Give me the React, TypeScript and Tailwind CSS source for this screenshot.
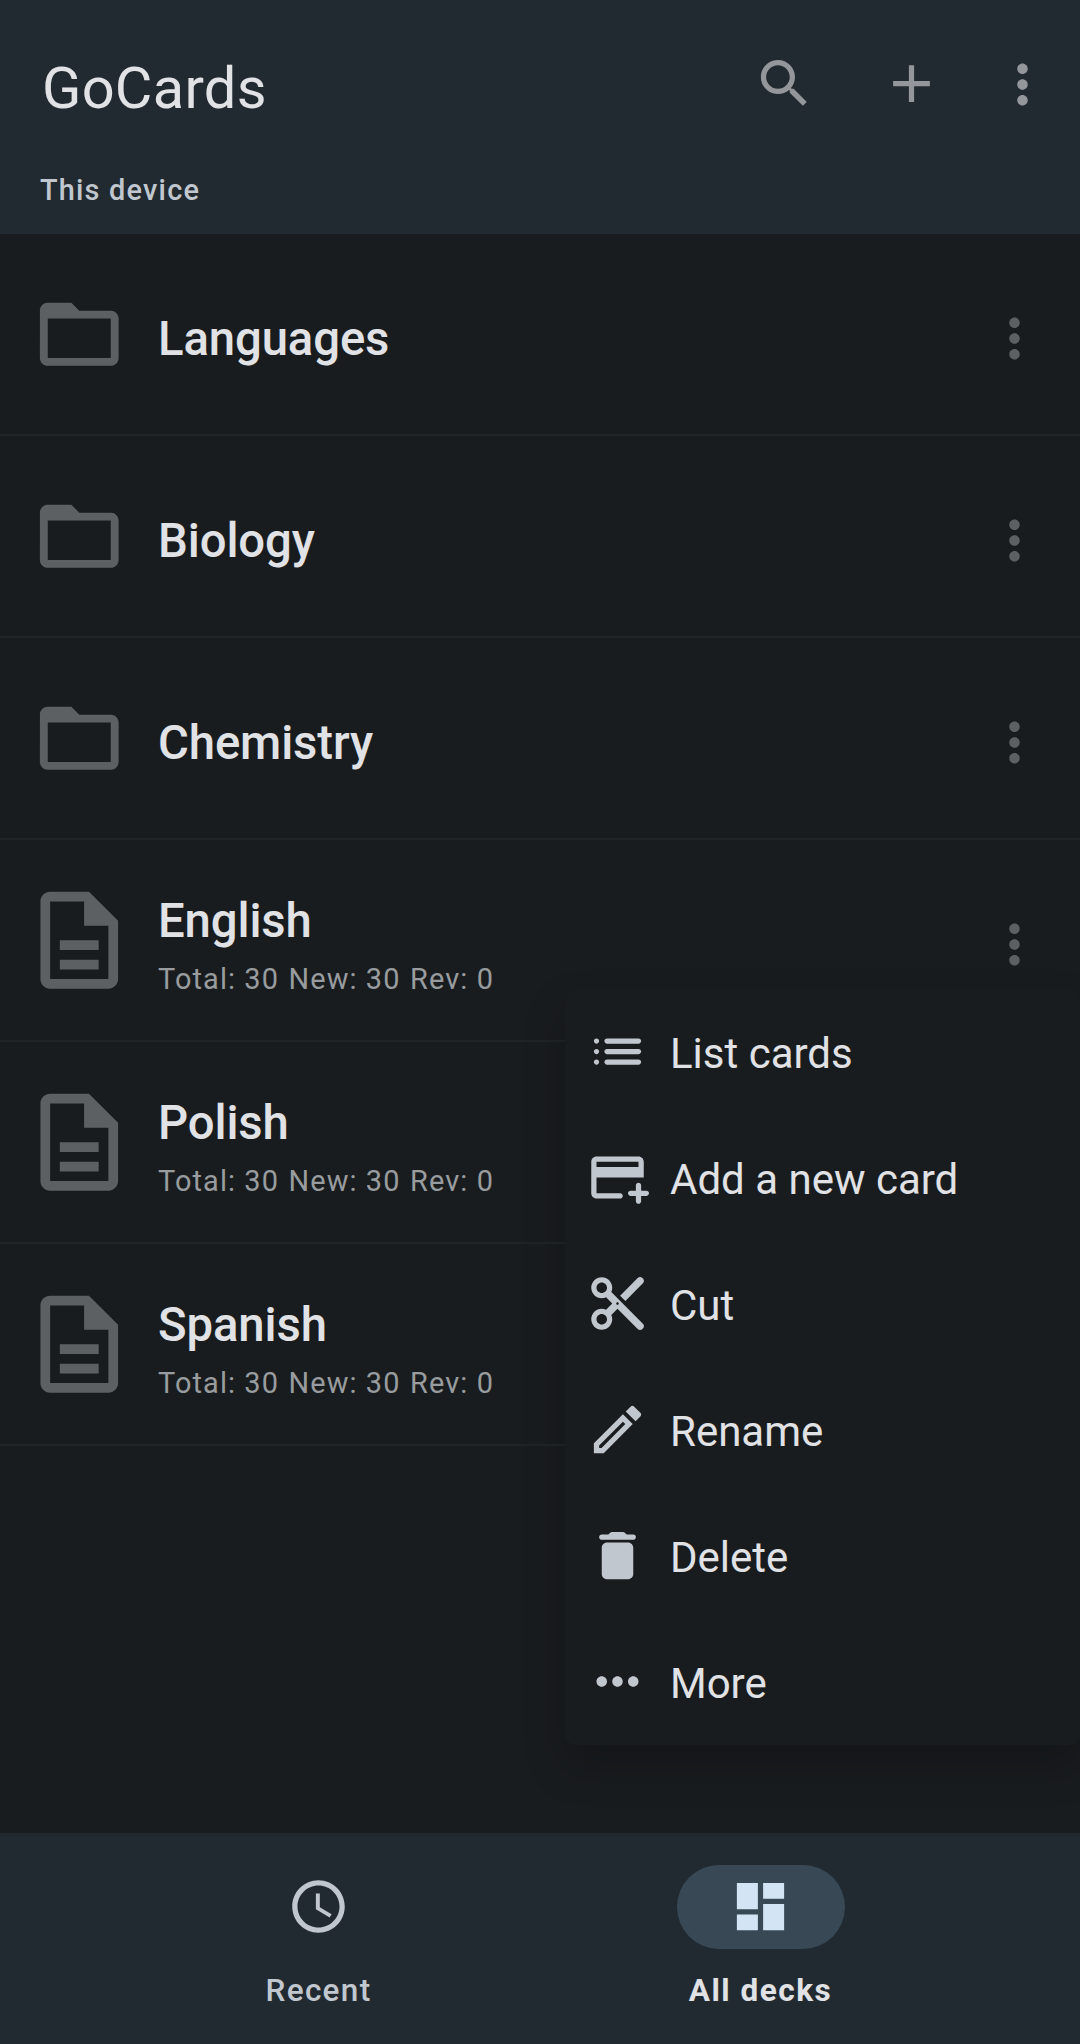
type IconProps = { d: string; className?: string };

function Icon({ d, className = "size-[63px]" }: IconProps) {
  return (
    <svg viewBox="0 0 24 24" fill="currentColor" fillRule="evenodd" className={`block shrink-0 ${className}`} aria-hidden="true">
      <path d={d} />
    </svg>
  );
}

const icons = {
  search:
    "M15.5 14h-.79l-.28-.27C15.41 12.59 16 11.11 16 9.5 16 5.91 13.09 3 9.5 3S3 5.91 3 9.5 5.91 16 9.5 16c1.61 0 3.09-.59 4.23-1.57l.27.28v.79l5 4.99L20.49 19l-4.99-5zm-6 0C7.01 14 5 11.99 5 9.5S7.01 5 9.5 5 14 7.01 14 9.5 11.99 14 9.5 14z",
  plus: "M19 13h-6v6h-2v-6H5v-2h6V5h2v6h6v2z",
  dots: "M12 8c1.1 0 2-.9 2-2s-.9-2-2-2-2 .9-2 2 .9 2 2 2zm0 2c-1.1 0-2 .9-2 2s.9 2 2 2 2-.9 2-2-.9-2-2-2zm0 6c-1.1 0-2 .9-2 2s.9 2 2 2 2-.9 2-2-.9-2-2-2z",
  folder:
    "M20 6h-8l-2-2H4c-1.1 0-1.99.9-1.99 2L2 18c0 1.1.9 2 2 2h16c1.1 0 2-.9 2-2V8c0-1.1-.9-2-2-2zm0 12H4V8h16v10z",
  file: "M8 16h8v2H8zm0-4h8v2H8zm6-10H6c-1.1 0-2 .9-2 2v16c0 1.1.89 2 1.99 2H18c1.1 0 2-.9 2-2V8l-6-6zm4 18H6V4h7v5h5v11z",
  list: "M4 13c.55 0 1-.45 1-1s-.45-1-1-1-1 .45-1 1 .45 1 1 1zm0 4c.55 0 1-.45 1-1s-.45-1-1-1-1 .45-1 1 .45 1 1 1zm0-8c.55 0 1-.45 1-1s-.45-1-1-1-1 .45-1 1 .45 1 1 1zm4 4h12c.55 0 1-.45 1-1s-.45-1-1-1H8c-.55 0-1 .45-1 1s.45 1 1 1zm0 4h12c.55 0 1-.45 1-1s-.45-1-1-1H8c-.55 0-1 .45-1 1s.45 1 1 1zM7 8c0 .55.45 1 1 1h12c.55 0 1-.45 1-1s-.45-1-1-1H8c-.55 0-1 .45-1 1z",
  addCard:
    "M20 4H4c-1.11 0-1.99.89-1.99 2L2 18c0 1.11.89 2 2 2h9c.55 0 1-.45 1-1s-.45-1-1-1H4v-6h18V6c0-1.11-.89-2-2-2zm0 4H4V6h16v2zm4 10c0 .55-.45 1-1 1h-2v2c0 .55-.45 1-1 1s-1-.45-1-1v-2h-2c-.55 0-1-.45-1-1s.45-1 1-1h2v-2c0-.55.45-1 1-1s1 .45 1 1v2h2c.55 0 1 .45 1 1z",
  cut: "M9.64 7.64c.23-.5.36-1.05.36-1.64 0-2.21-1.79-4-4-4S2 3.79 2 6s1.79 4 4 4c.59 0 1.14-.13 1.64-.36L10 12l-2.36 2.36C7.14 14.13 6.59 14 6 14c-2.21 0-4 1.79-4 4s1.79 4 4 4 4-1.79 4-4c0-.59-.13-1.14-.36-1.64L12 14l7.59 7.59a1.414 1.414 0 0 0 2-2L9.64 7.64zM6 8c-1.1 0-2-.89-2-2s.9-2 2-2 2 .89 2 2-.9 2-2 2zm0 12c-1.1 0-2-.89-2-2s.9-2 2-2 2 .89 2 2-.9 2-2 2zm6-7.5c-.28 0-.5-.22-.5-.5s.22-.5.5-.5.5.22.5.5-.22.5-.5.5zM19.59 2.41 13 9l2 2 6.59-6.59a1.414 1.414 0 0 0-2-2z",
  edit: "M3 17.25V21h3.75L17.81 9.94l-3.75-3.75L3 17.25zM5 18.08V19h.92l9.06-9.06-.92-.92L5 18.08zM20.71 7.04c.39-.39.39-1.02 0-1.41l-2.34-2.34c-.39-.39-1.02-.39-1.41 0l-1.83 1.83 3.75 3.75 1.83-1.83z",
  trash:
    "M6 19c0 1.1.9 2 2 2h8c1.1 0 2-.9 2-2V9c0-1.1-.9-2-2-2H8c-1.1 0-2 .9-2 2v10zM18 4h-2.5l-.71-.71c-.18-.18-.44-.29-.7-.29H9.91c-.26 0-.52.11-.7.29L8.5 4H6c-.55 0-1 .45-1 1s.45 1 1 1h12c.55 0 1-.45 1-1s-.45-1-1-1z",
  more: "M6 10c-1.1 0-2 .9-2 2s.9 2 2 2 2-.9 2-2-.9-2-2-2zm12 0c-1.1 0-2 .9-2 2s.9 2 2 2 2-.9 2-2-.9-2-2-2zm-6 0c-1.1 0-2 .9-2 2s.9 2 2 2 2-.9 2-2-.9-2-2-2z",
  clock:
    "M11.99 2C6.47 2 2 6.48 2 12s4.47 10 9.99 10C17.52 22 22 17.52 22 12S17.52 2 11.99 2zM12 20c-4.42 0-8-3.58-8-8s3.58-8 8-8 8 3.58 8 8-3.58 8-8 8zm.5-13H11v6l5.25 3.15.75-1.23-4.5-2.67V7z",
  dashboard: "M3 13h8V3H3v10zm0 8h8v-6H3v6zm10 0h8V11h-8v10zm0-18v6h8V3h-8z",
};

const folders = ["Languages", "Biology", "Chemistry"];
const decks = ["English", "Polish", "Spanish"];

const menu = [
  { label: "List cards", icon: icons.list },
  { label: "Add a new card", icon: icons.addCard },
  { label: "Cut", icon: icons.cut },
  { label: "Rename", icon: icons.edit },
  { label: "Delete", icon: icons.trash },
  { label: "More", icon: icons.more },
];

function RowMenuButton() {
  return (
    <button className="mt-[9px] ml-auto text-[#5d6063]" aria-label="Options">
      <Icon d={icons.dots} />
    </button>
  );
}

export default function App() {
  return (
    <div className="relative flex h-[2044px] w-[1080px] flex-col overflow-hidden bg-[#191c1e] font-['Roboto',sans-serif] text-[#e1e2e5]">
      <header className="h-[234px] shrink-0 bg-[#222a31]">
        <div className="flex h-[164px] items-start pt-[52px] pr-[26px] pl-[42px]">
          <h1 className="mt-[2px] text-[57.75px] leading-[68px] tracking-[0.3px]">GoCards</h1>
          <div className="ml-auto flex text-[#93979b]">
            <Icon d={icons.search} />
            <Icon d={icons.plus} className="ml-16 size-[63px]" />
            <Icon d={icons.dots} className="mt-px ml-12 size-[63px]" />
          </div>
        </div>
        <p className="mt-[9px] pl-10 text-[28.9px] leading-[34px] font-medium tracking-[1.2px] text-[#c1c7ce]">This device</p>
      </header>

      <main className="flex-1">
        {folders.map((name) => (
          <div key={name} className="flex h-[202px] items-center border-b-2 border-[#1f2426] pr-[34px] pl-8">
            <Icon d={icons.folder} className="size-[94.5px] text-[#5d6063]" />
            <h2 className="mt-[9px] ml-[31.5px] text-[47.25px] leading-[56px] font-medium tracking-[-0.1px]">{name}</h2>
            <RowMenuButton />
          </div>
        ))}
        {decks.map((name) => (
          <div key={name} className="flex h-[202px] items-center border-b-2 border-[#1f2426] pr-[34px] pl-[21px]">
            <Icon d={icons.file} className="size-[116.5px] text-[#5d6063]" />
            <div className="mt-[9px] ml-[20.5px]">
              <h2 className="text-[47.25px] leading-[56px] font-medium tracking-[-0.1px]">{name}</h2>
              <div className="mt-[13px] flex gap-[9.5px] text-[28.9px] leading-[34px] tracking-[1.1px] text-[#999c9f]">
                <span>Total: 30</span>
                <span>New: 30</span>
                <span>Rev: 0</span>
              </div>
            </div>
            <RowMenuButton />
          </div>
        ))}
      </main>

      <nav className="flex h-[211px] shrink-0 justify-center bg-[#222a31] pt-8 pr-px">
        <div className="flex w-[442px] flex-col items-center text-[#c1c7ce]">
          <div className="flex h-[84px] w-[168px] items-center justify-center pb-px">
            <Icon d={icons.clock} />
          </div>
          <span className="mt-[23px] text-[31.5px] leading-[38px] font-medium tracking-[1.3px]">Recent</span>
        </div>
        <div className="flex w-[442px] flex-col items-center">
          <div className="flex h-[84px] w-[168px] items-center justify-center rounded-full bg-[#384955] pb-px text-[#d3e5f5]">
            <Icon d={icons.dashboard} />
          </div>
          <span className="mt-[23px] text-[31.5px] leading-[38px] font-bold tracking-[1.5px]">All decks</span>
        </div>
      </nav>

      <div className="absolute top-[989px] right-0 w-[515px] rounded-[10px] bg-[#191c1e] shadow-[0_21px_42px_rgba(0,0,0,0.22)]">
        {menu.map((item) => (
          <div key={item.label} className="flex h-[126px] items-center pl-[21px]">
            <Icon d={item.icon} className="mb-[2px] size-[63px] text-[#c1c7ce]" />
            <span className="mt-[3px] ml-[21px] text-[42px] leading-[50px]">{item.label}</span>
          </div>
        ))}
      </div>
    </div>
  );
}
